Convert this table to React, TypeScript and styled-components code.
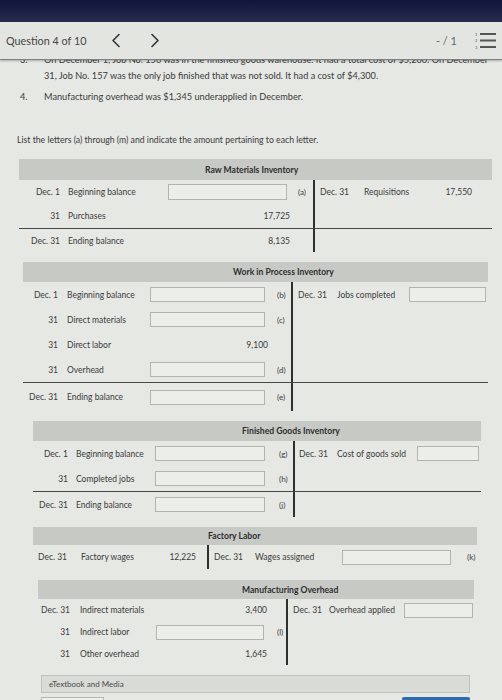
import React from 'react';
import styled, { createGlobalStyle } from 'styled-components';

const GlobalStyle = createGlobalStyle`
  html, body { margin: 0; padding: 0; }
  body { background: #e6e8e4; font-family: Lato, "Open Sans", sans-serif; color: #3a3b3a; }
`;

const Page = styled.div`
  width: 502px;
  height: 700px;
  overflow: hidden;
  display: flex;
  flex-direction: column;
  background: #e6e8e4;
`;

const Bezel = styled.div`
  height: 22px;
  flex: none;
  background: linear-gradient(#11153a, #272c4c);
`;

const Header = styled.header`
  height: 37px;
  flex: none;
  display: flex;
  align-items: center;
  padding: 0 5px 0 6px;
  background: #e3e5e1;
  border-bottom: 1px solid #7d8080;
  box-shadow: 0 1px 2px rgba(0, 0, 0, 0.25);
  position: relative;
  z-index: 1;
`;

const QTitle = styled.span`
  font-size: 10.8px;
  color: #454645;
`;

const Nav = styled.div`
  display: flex;
  align-items: center;
  gap: 29px;
  margin-left: 25px;
  color: #333;
`;

const Spacer = styled.div`flex: 1;`;

const Score = styled.span`
  font-size: 11px;
  color: #666;
  margin-right: 18px;
`;

const Main = styled.main`
  flex: 1;
  overflow: hidden;
`;

const Problem = styled.ol`
  margin: -8px 0 0;
  padding: 0;
  list-style: none;
`;

const Item = styled.li`
  display: grid;
  grid-template-columns: 24px 1fr;
  padding-left: 20px;
  font-size: 9.2px;
  line-height: 16px;
  color: #3a3b3a;
  & + & { margin-top: 5px; }
`;

const Line = styled.span`
  display: block;
  white-space: nowrap;
`;

const Instruction = styled.p`
  margin: 27px 0 0 17px;
  font-size: 8.7px;
  line-height: 16px;
`;

type Layout = {
  x: number; width: number; split: number; headH: number; titleX: number;
  rowH: number; cols: number[]; descPad: number; letterPad: number;
  rPad: number; rCols: number[]; rLetterPad: number; mt: number; bottomH: number; inputH: number;
};

type Cell = { date: string; desc: string; amount?: string; input?: boolean; letter?: string };

const Account = styled.section<{ $x: number; $w: number; $mt: number }>`
  margin: ${(p) => p.$mt}px 0 0 ${(p) => p.$x}px;
  width: ${(p) => p.$w}px;
  font-size: 8.5px;
`;

const TitleBar = styled.div<{ $h: number; $pl: number }>`
  height: ${(p) => p.$h}px;
  background: #c7c9c5;
  display: flex;
  align-items: center;
  padding-left: ${(p) => p.$pl}px;
  font-weight: 700;
  font-size: 8.6px;
  color: #2d2e2d;
`;

const Section = styled.div<{ $ruled?: boolean }>`
  display: flex;
  border-top: ${(p) => (p.$ruled ? '1px solid #474847' : 'none')};
`;

const LeftHalf = styled.div<{ $w: number }>`
  width: ${(p) => p.$w}px;
  flex: none;
  border-right: 2px solid #2e2f2e;
`;

const RightHalf = styled.div<{ $pl: number }>`
  flex: 1;
  padding-left: ${(p) => p.$pl}px;
`;

const Row = styled.div<{ $cols: string; $h: number }>`
  display: grid;
  grid-template-columns: ${(p) => p.$cols};
  height: ${(p) => p.$h}px;
  align-items: center;
  white-space: nowrap;
`;

const DateCell = styled.span<{ $right?: boolean }>`
  text-align: ${(p) => (p.$right ? 'right' : 'left')};
`;

const DescCell = styled.span<{ $pl: number }>`
  padding-left: ${(p) => p.$pl}px;
  overflow: hidden;
`;

const AmtCell = styled.span`
  display: flex;
  justify-content: flex-end;
`;

const InputBox = styled.span<{ $h: number }>`
  display: block;
  width: calc(100% - 3px);
  margin-right: auto;
  height: ${(p) => p.$h}px;
  box-sizing: border-box;
  border: 1px solid #b2b4b0;
  background: #eceeea;
`;

const LetterCell = styled.span<{ $pl: number }>`
  padding-left: ${(p) => p.$pl}px;
  font-size: 8px;
`;

function TAccount({ title, left, right, rule, L }: { title: string; left: Cell[]; right: Cell[]; rule?: number; L: Layout }) {
  const leftCols = L.cols.map((c) => `${c}px`).join(' ');
  const rightCols = `${L.rCols[0]}px ${L.rCols[1]}px ${L.rCols[2]}px 1fr`;
  const top = rule === undefined ? left : left.slice(0, rule);
  const bottom = rule === undefined ? [] : left.slice(rule);
  const renderLeft = (c: Cell, i: number, h: number) => (
    <Row key={i} $cols={leftCols} $h={h}>
      <DateCell $right>{c.date}</DateCell>
      <DescCell $pl={L.descPad}>{c.desc}</DescCell>
      <AmtCell>{c.input ? <InputBox $h={L.inputH} /> : c.amount}</AmtCell>
      <LetterCell $pl={L.letterPad}>{c.letter}</LetterCell>
    </Row>
  );
  return (
    <Account $x={L.x} $w={L.width} $mt={L.mt}>
      <TitleBar $h={L.headH} $pl={L.titleX}>{title}</TitleBar>
      <Section>
        <LeftHalf $w={L.split}>{top.map((c, i) => renderLeft(c, i, L.rowH))}</LeftHalf>
        <RightHalf $pl={L.rPad}>
          {right.map((c, i) => (
            <Row key={i} $cols={rightCols} $h={L.rowH}>
              <DateCell>{c.date}</DateCell>
              <DescCell $pl={0}>{c.desc}</DescCell>
              <AmtCell>{c.input ? <InputBox $h={L.inputH} /> : c.amount}</AmtCell>
              <LetterCell $pl={L.rLetterPad}>{c.letter}</LetterCell>
            </Row>
          ))}
        </RightHalf>
      </Section>
      {bottom.length > 0 && (
        <Section $ruled>
          <LeftHalf $w={L.split}>{bottom.map((c, i) => renderLeft(c, i, L.bottomH))}</LeftHalf>
          <RightHalf $pl={L.rPad} />
        </Section>
      )}
    </Account>
  );
}

const Media = styled.div`
  margin: 10px 0 0 41px;
  width: 429px;
  height: 18px;
  box-sizing: border-box;
  border: 1px solid #c0c2be;
  background: #d9dbd7;
  display: flex;
  align-items: center;
  padding-left: 7px;
  font-size: 8px;
  color: #4a4b4a;
`;

const Actions = styled.div`
  display: flex;
  justify-content: space-between;
  margin: 4px 0 0 41px;
  width: 429px;
`;

const GhostButton = styled.div`
  width: 63px;
  height: 18px;
  border: 1px solid #b5b7b3;
  background: #eef0ec;
  box-sizing: border-box;
`;

const PrimaryButton = styled.div`
  width: 68px;
  height: 18px;
  background: #2b6cb3;
  border-radius: 2px;
`;

const Chevron = ({ dir }: { dir: 'left' | 'right' }) => (
  <svg width="10" height="15" viewBox="0 0 10 15">
    <polyline
      points={dir === 'left' ? '8,1.5 2,7.5 8,13.5' : '2,1.5 8,7.5 2,13.5'}
      fill="none"
      stroke="#333"
      strokeWidth="1.6"
      strokeLinecap="round"
      strokeLinejoin="round"
    />
  </svg>
);

const ListIcon = () => (
  <svg width="22" height="20" viewBox="0 0 22 20">
    <g fill="#555" fontSize="4" fontFamily="Lato, sans-serif">
      <text x="0" y="4.5">1</text>
      <text x="0" y="11">2</text>
      <text x="0" y="17.5">3</text>
    </g>
    <g stroke="#555" strokeWidth="2">
      <line x1="5" y1="3" x2="21" y2="3" />
      <line x1="5" y1="9.5" x2="21" y2="9.5" />
      <line x1="5" y1="16" x2="21" y2="16" />
    </g>
  </svg>
);

const RM: Layout = { x: 19, width: 473, split: 294, headH: 21, titleX: 186, rowH: 24, cols: [41, 108, 122, 23], descPad: 8, letterPad: 8, rPad: 5, rCols: [44, 76, 32], rLetterPad: 6, mt: 11, bottomH: 23, inputH: 16 };
const WIP: Layout = { x: 23, width: 465, split: 268, headH: 20, titleX: 210, rowH: 25, cols: [35, 92, 118, 23], descPad: 9, letterPad: 9, rPad: 5, rCols: [39, 72, 80], rLetterPad: 6, mt: 10, bottomH: 28, inputH: 15 };
const FG: Layout = { x: 33, width: 448, split: 260, headH: 20, titleX: 209, rowH: 25, cols: [35, 87, 113, 25], descPad: 8, letterPad: 11, rPad: 4, rCols: [38, 80, 65], rLetterPad: 6, mt: 10, bottomH: 25, inputH: 15 };
const FL: Layout = { x: 33, width: 444, split: 174, headH: 18, titleX: 175, rowH: 24, cols: [34, 79, 50, 11], descPad: 14, letterPad: 0, rPad: 5, rCols: [41, 87, 112], rLetterPad: 13, mt: 10, bottomH: 24, inputH: 15 };
const MO: Layout = { x: 38, width: 436, split: 248, headH: 19, titleX: 204, rowH: 22, cols: [32, 86, 111, 19], descPad: 10, letterPad: 10, rPad: 5, rCols: [36, 75, 72], rLetterPad: 6, mt: 11, bottomH: 22, inputH: 15 };

export default function App() {
  return (
    <>
      <GlobalStyle />
      <Page>
        <Bezel />
        <Header>
          <QTitle>Question 4 of 10</QTitle>
          <Nav>
            <Chevron dir="left" />
            <Chevron dir="right" />
          </Nav>
          <Spacer />
          <Score>- / 1</Score>
          <ListIcon />
        </Header>
        <Main>
          <Problem>
            <Item>
              <span>3.</span>
              <span>
                <Line>On December 1, Job No. 156 was in the finished goods warehouse. It had a total cost of $5,200. On December</Line>
                <Line>31, Job No. 157 was the only job finished that was not sold. It had a cost of $4,300.</Line>
              </span>
            </Item>
            <Item>
              <span>4.</span>
              <Line>Manufacturing overhead was $1,345 underapplied in December.</Line>
            </Item>
          </Problem>
          <Instruction>List the letters (a) through (m) and indicate the amount pertaining to each letter.</Instruction>

          <TAccount
            title="Raw Materials Inventory"
            L={RM}
            rule={2}
            left={[
              { date: 'Dec. 1', desc: 'Beginning balance', input: true, letter: '(a)' },
              { date: '31', desc: 'Purchases', amount: '17,725' },
              { date: 'Dec. 31', desc: 'Ending balance', amount: '8,135' },
            ]}
            right={[{ date: 'Dec. 31', desc: 'Requisitions', amount: '17,550' }]}
          />

          <TAccount
            title="Work in Process Inventory"
            L={WIP}
            rule={4}
            left={[
              { date: 'Dec. 1', desc: 'Beginning balance', input: true, letter: '(b)' },
              { date: '31', desc: 'Direct materials', input: true, letter: '(c)' },
              { date: '31', desc: 'Direct labor', amount: '9,100' },
              { date: '31', desc: 'Overhead', input: true, letter: '(d)' },
              { date: 'Dec. 31', desc: 'Ending balance', input: true, letter: '(e)' },
            ]}
            right={[{ date: 'Dec. 31', desc: 'Jobs completed', input: true }]}
          />

          <TAccount
            title="Finished Goods Inventory"
            L={FG}
            rule={2}
            left={[
              { date: 'Dec. 1', desc: 'Beginning balance', input: true, letter: '(g)' },
              { date: '31', desc: 'Completed jobs', input: true, letter: '(h)' },
              { date: 'Dec. 31', desc: 'Ending balance', input: true, letter: '(j)' },
            ]}
            right={[{ date: 'Dec. 31', desc: 'Cost of goods sold', input: true }]}
          />

          <TAccount
            title="Factory Labor"
            L={FL}
            left={[{ date: 'Dec. 31', desc: 'Factory wages', amount: '12,225' }]}
            right={[{ date: 'Dec. 31', desc: 'Wages assigned', input: true, letter: '(k)' }]}
          />

          <TAccount
            title="Manufacturing Overhead"
            L={MO}
            left={[
              { date: 'Dec. 31', desc: 'Indirect materials', amount: '3,400' },
              { date: '31', desc: 'Indirect labor', input: true, letter: '(l)' },
              { date: '31', desc: 'Other overhead', amount: '1,645' },
            ]}
            right={[{ date: 'Dec. 31', desc: 'Overhead applied', input: true }]}
          />

          <Media>eTextbook and Media</Media>
          <Actions>
            <GhostButton />
            <PrimaryButton />
          </Actions>
        </Main>
      </Page>
    </>
  );
}
